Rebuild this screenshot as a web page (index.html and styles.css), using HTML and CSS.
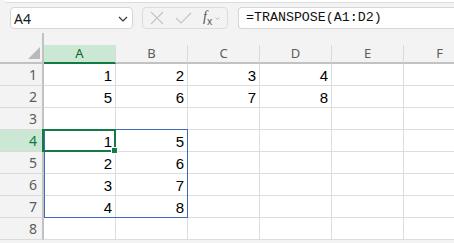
FILE: index.html
```html
<!DOCTYPE html>
<html lang="en">
<head>
  <meta charset="UTF-8" />
  <title>TRANSPOSE</title>
  <link rel="stylesheet" href="styles.css">
</head>
<body>

  <div class="ribbon-edge"></div>

  <div class="toolbar">
    <div class="namebox">
      <span>A4</span>
      <svg class="chev" width="10" height="6" viewBox="0 0 10 6"><path d="M1 1 L5 5 L9 1" fill="none" stroke="#333" stroke-width="1.2"/></svg>
    </div>
    <div class="fx-group">
      <svg width="14" height="14" viewBox="0 0 14 14"><path d="M1 1 L13 13 M13 1 L1 13" stroke="#c4c4c4" stroke-width="1.1"/></svg>
      <svg width="17" height="12" viewBox="0 0 17 12"><path d="M1 6 L6 11 L16 1" fill="none" stroke="#c4c4c4" stroke-width="1.1"/></svg>
      <span class="fx">f<sub>x</sub></span>
      <svg class="mini" width="5" height="3" viewBox="0 0 5 3"><path d="M0.5 0.5 L2.5 2.5 L4.5 0.5" fill="none" stroke="#b0b0b0" stroke-width="0.9"/></svg>
    </div>
    <div class="formula">=TRANSPOSE(A1:D2)</div>
  </div>

  <div class="sheet">
    <div class="corner"><span class="tri"></span></div>
    <div class="colhead active">A</div>
    <div class="colhead">B</div>
    <div class="colhead">C</div>
    <div class="colhead">D</div>
    <div class="colhead">E</div>
    <div class="colhead">F</div>

    <div class="rowhead">1</div>
    <div class="cell">1</div><div class="cell">2</div><div class="cell">3</div><div class="cell">4</div><div class="cell"></div><div class="cell"></div>

    <div class="rowhead">2</div>
    <div class="cell">5</div><div class="cell">6</div><div class="cell">7</div><div class="cell">8</div><div class="cell"></div><div class="cell"></div>

    <div class="rowhead">3</div>
    <div class="cell"></div><div class="cell"></div><div class="cell"></div><div class="cell"></div><div class="cell"></div><div class="cell"></div>

    <div class="rowhead active">4</div>
    <div class="cell current">1<span class="sel"><span class="handle"></span></span></div><div class="cell">5</div><div class="cell"></div><div class="cell"></div><div class="cell"></div><div class="cell"></div>

    <div class="rowhead">5</div>
    <div class="cell">2</div><div class="cell">6</div><div class="cell"></div><div class="cell"></div><div class="cell"></div><div class="cell"></div>

    <div class="rowhead">6</div>
    <div class="cell">3</div><div class="cell">7</div><div class="cell"></div><div class="cell"></div><div class="cell"></div><div class="cell"></div>

    <div class="rowhead">7</div>
    <div class="cell">4</div><div class="cell">8</div><div class="cell"></div><div class="cell"></div><div class="cell"></div><div class="cell"></div>

    <div class="rowhead">8</div>
    <div class="cell"></div><div class="cell"></div><div class="cell"></div><div class="cell"></div><div class="cell"></div><div class="cell"></div>

    <div class="spill"></div>
  </div>

</body>
</html>
```

FILE: styles.css
```css
body {
  margin: 0;
  background: #f3f3f3;
  font-family: "Noto Sans", sans-serif;
  overflow: hidden;
}
.ribbon-edge {
  height: 2px;
  margin-left: 4px;
  background: #fff;
  border-bottom: 1px solid #dcdcdc;
  border-bottom-left-radius: 4px;
}
.toolbar {
  display: flex;
  align-items: center;
  height: 22px;
  padding: 4px 0 4px 10px;
}
.namebox {
  box-sizing: border-box;
  width: 123px;
  height: 22px;
  background: #fff;
  border: 1px solid #d6d6d6;
  border-radius: 4px;
  display: flex;
  align-items: center;
  justify-content: space-between;
  padding: 0 4px 0 3px;
  font-size: 14px;
  color: #1a1a1a;
}
.namebox .chev {
  margin-top: 1px;
}
.fx-group {
  box-sizing: border-box;
  width: 86px;
  height: 22px;
  margin-left: 9px;
  border: 1px solid #dcdcdc;
  border-radius: 4px;
  display: flex;
  align-items: center;
  padding-left: 7px;
}
.fx-group svg:nth-child(2) {
  margin-left: 11px;
}
.fx {
  margin-left: 11px;
  font-family: "Liberation Serif", serif;
  font-style: italic;
  font-size: 14px;
  color: #555;
  line-height: 1;
}
.fx sub {
  font-size: 10px;
  font-style: normal;
  font-family: "Noto Sans", sans-serif;
}
.fx-group .mini {
  margin-left: 3px;
}
.formula {
  flex: 1;
  box-sizing: border-box;
  height: 22px;
  margin-left: 10px;
  background: #fff;
  border: 1px solid #d6d6d6;
  border-right: none;
  border-radius: 4px 0 0 4px;
  padding-left: 7px;
  font-family: "Liberation Mono", monospace;
  font-size: 13.3px;
  line-height: 20px;
  color: #111;
}
.sheet {
  position: relative;
  display: grid;
  grid-template-columns: 44px repeat(6, 72px);
  grid-template-rows: 31px repeat(8, 22px);
}
.corner {
  position: relative;
  box-sizing: border-box;
  border-right: 2px solid #c2c2c2;
  border-bottom: 2px solid #c2c2c2;
}
.tri {
  position: absolute;
  right: 2px;
  bottom: 3px;
  width: 0;
  height: 0;
  border-left: 12px solid transparent;
  border-bottom: 12px solid #b9b9b9;
}
.colhead {
  box-sizing: border-box;
  align-self: end;
  height: 19px;
  border-right: 1px solid #dadada;
  border-bottom: 2px solid #c2c2c2;
  text-align: center;
  font-size: 13px;
  line-height: 17px;
  color: #5c5c5c;
}
.colhead.active {
  background: #cbe8d5;
  border-bottom-color: #137a43;
  color: #0f5f34;
}
.rowhead {
  box-sizing: border-box;
  border-right: 2px solid #c2c2c2;
  border-bottom: 1px solid #dadada;
  text-align: right;
  padding-right: 5px;
  font-size: 14px;
  line-height: 22px;
  color: #5c5c5c;
}
.rowhead.active {
  background: #cbe8d5;
  color: #137a43;
}
.cell {
  position: relative;
  box-sizing: border-box;
  background: #fff;
  border-right: 1px solid #dddddd;
  border-bottom: 1px solid #dddddd;
  text-align: right;
  padding: 1px 3px 0 0;
  font-family: "Liberation Sans", sans-serif;
  font-size: 15px;
  line-height: 21px;
  color: #000;
}
.sel {
  position: absolute;
  left: -2px;
  top: -1px;
  right: -1px;
  bottom: -1px;
  border: 2px solid #137a43;
  z-index: 2;
}
.handle {
  position: absolute;
  right: -4px;
  bottom: -4px;
  width: 5px;
  height: 5px;
  background: #137a43;
  border: 1px solid #fff;
}
.spill {
  position: absolute;
  left: 44px;
  top: 96px;
  width: 142px;
  height: 87px;
  border: 1px solid #3f6bb8;
  z-index: 1;
}
```
